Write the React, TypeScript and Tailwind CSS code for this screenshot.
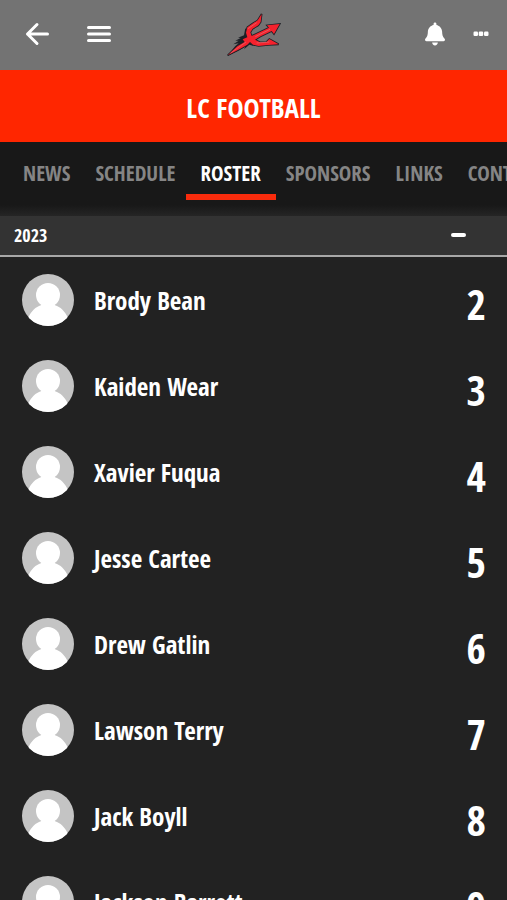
import { FaBell } from 'react-icons/fa'

type Player = {
  name: string
  jersey: number
}

const tabs = ['News', 'Schedule', 'Roster', 'Sponsors', 'Links', 'Contact']

const players: Player[] = [
  { name: 'Brody Bean', jersey: 2 },
  { name: 'Kaiden Wear', jersey: 3 },
  { name: 'Xavier Fuqua', jersey: 4 },
  { name: 'Jesse Cartee', jersey: 5 },
  { name: 'Drew Gatlin', jersey: 6 },
  { name: 'Lawson Terry', jersey: 7 },
  { name: 'Jack Boyll', jersey: 8 },
  { name: 'Jackson Barrett', jersey: 9 },
]

const TRIDENT =
  'M25 148 L54 121 L76 108 L70 100 L84 94 L80 80 L84 64 L99 53 L115 43 L127 24 L124 48 L117 58 L100 68 L93 79 L97 90 L116 81 L149 65 L143 58 L181 54 L164 84 L157 75 L124 91 L107 101 L122 109 L141 108 L150 99 L178 115 L146 117 L118 120 L101 116 L92 108 L84 116 L60 130 Z'

function TridentLogo() {
  return (
    <svg viewBox="20 18 168 132" className="h-11 w-14" role="img" aria-label="Trident logo">
      <path
        fill="#1d2026"
        d="M24 149 L48 120 L58 112 L42 115 L58 104 L48 104 L64 96 L56 95 L74 88 L78 66 L90 92 L94 112 L104 120 L90 116 L74 130 L78 122 L54 136 Z"
      />
      <path fill="#1d2026" stroke="#1d2026" strokeWidth="5" strokeLinejoin="miter" strokeMiterlimit="3" d={TRIDENT} />
      <path fill="#f5222d" d={TRIDENT} />
      <path
        fill="none"
        stroke="#d98a8c"
        strokeWidth="1.5"
        d="M34 141 L80 108 M86 68 L112 50 M108 92 L152 70 M112 111 L150 108"
      />
    </svg>
  )
}

function Avatar() {
  return (
    <svg viewBox="0 0 52 52" className="size-[52px] shrink-0 rounded-full" aria-hidden="true">
      <rect width="52" height="52" fill="#c4c4c4" />
      <ellipse cx="26" cy="21" rx="12" ry="12" fill="#fff" />
      <path fill="#fff" d="M20 29 H32 C32 31 33 31 35 32 C40 34 44 39 47 46 L47 52 H5 V46 C8 39 12 34 17 32 C19 31 20 31 20 29 Z" />
    </svg>
  )
}

function PlayerRow({ player }: { player: Player }) {
  return (
    <li className="flex h-[86px] items-center pr-[21px] pl-[22px]">
      <Avatar />
      <span className="ml-5 flex-1 pt-[2px] text-[25px]">{player.name}</span>
      <span className="pt-2 text-[42px] leading-none">{player.jersey}</span>
    </li>
  )
}

export default function App() {
  return (
    <div className="flex h-screen flex-col overflow-hidden bg-[#222] font-['Open_Sans_Condensed','Liberation_Sans_Narrow','Open_Sans',sans-serif] font-bold text-white">
      <header className="grid h-[70px] shrink-0 grid-cols-[1fr_auto_1fr] items-center bg-[#737373] px-[18px] pb-[2px]">
        <div className="flex items-center gap-6">
          <button type="button" aria-label="Back" className="flex size-[38px] items-center justify-center">
            <svg viewBox="0 0 24 24" className="size-6" fill="none" stroke="currentColor" strokeWidth="3" strokeLinecap="round" strokeLinejoin="round">
              <path d="M22.500 12H2.500M12 2.500L2.500 12L12 21.500" />
            </svg>
          </button>
          <button type="button" aria-label="Menu" className="flex size-[38px] items-center justify-center">
            <svg viewBox="0 0 24 18" className="h-[18px] w-6" fill="none" stroke="currentColor" strokeWidth="3" strokeLinecap="round">
              <path d="M1.500 2.500H22.500M1.500 9H22.500M1.500 15.500H22.500" />
            </svg>
          </button>
        </div>
        <TridentLogo />
        <div className="flex items-center justify-end gap-7">
          <button type="button" aria-label="Notifications">
            <FaBell className="h-6 w-5" />
          </button>
          <button type="button" aria-label="More">
            <svg viewBox="0 0 16 6" className="h-[6px] w-4" fill="currentColor">
              <rect x="0.500" y="0.500" width="4.500" height="4.500" rx="1.200" />
              <rect x="5.700" y="0.500" width="4.500" height="4.500" rx="1.200" />
              <rect x="11" y="0.500" width="4.500" height="4.500" rx="1.200" />
            </svg>
          </button>
        </div>
      </header>

      <h1 className="flex h-[72px] shrink-0 items-center justify-center bg-[#ff2600] pt-1 text-[27px]">
        LC FOOTBALL
      </h1>

      <nav className="flex h-[74px] shrink-0 gap-[25px] overflow-hidden bg-linear-to-b from-[#181818] from-85% to-[#252525] pl-[23px]">
        {tabs.map((tab) => (
          <a
            key={tab}
            href={`#${tab.toLowerCase()}`}
            aria-current={tab === 'Roster' ? 'page' : undefined}
            className="relative flex h-[58px] items-center pt-[6px] text-[21px] text-[#858585] uppercase aria-[current=page]:text-white"
          >
            {tab}
            {tab === 'Roster' && <span className="absolute -inset-x-[15px] bottom-0 h-[6px] bg-[#f92b0c]" />}
          </a>
        ))}
      </nav>

      <main className="min-h-0 flex-1 overflow-y-auto [scrollbar-width:none]">
        <button
          type="button"
          aria-expanded="true"
          className="flex h-[41px] w-full items-center justify-between border-b-2 border-[#a8a8a8] bg-[#333] pr-[41px] pb-[2px] pl-[14px] text-lg"
        >
          2023
          <span className="h-1 w-[15px] rounded-xs bg-white" />
        </button>
        <ul>
          {players.map((player) => (
            <PlayerRow key={player.name} player={player} />
          ))}
        </ul>
      </main>
    </div>
  )
}
